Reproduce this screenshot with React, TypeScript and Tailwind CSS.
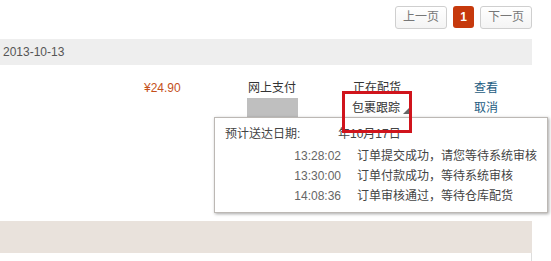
import React from "react";

const font = { fontFamily: '"Liberation Sans", "Noto Sans CJK SC", sans-serif' };

export default function App() {
  const logs = [
    ["13:28:02", "订单提交成功，请您等待系统审核"],
    ["13:30:00", "订单付款成功，等待系统审核"],
    ["14:08:36", "订单审核通过，等待仓库配货"],
  ];
  return (
    <div
      className="relative w-[551px] h-[261px] overflow-hidden bg-white text-[12px] text-[#333]"
      style={font}
    >
      <div className="w-[532px]">
        {/* pagination */}
        <div className="flex justify-end items-start pt-[6px] gap-[6px]">
          <button className="w-[52px] h-[23px] border border-[#cfcfcf] rounded-[3px] bg-gradient-to-b from-white to-[#f4f4f4] text-[#777] text-[12px] leading-[21px]">
            上一页
          </button>
          <button className="w-[21px] h-[22px] rounded-[3px] bg-[#c6390c] text-white font-bold text-[12px] leading-[22px]">
            1
          </button>
          <button className="w-[52px] h-[23px] border border-[#cfcfcf] rounded-[3px] bg-gradient-to-b from-white to-[#f4f4f4] text-[#777] text-[12px] leading-[21px]">
            下一页
          </button>
        </div>

        {/* date bar */}
        <div className="mt-[10px] h-[26px] bg-[#eeeeee] pl-[3px] leading-[26px] text-[#555]">
          2013-10-13
        </div>

        {/* order row */}
        <div className="h-[156px] pt-[13px] flex leading-[20px]">
          <div className="w-[144px]" />
          <div className="w-[103px] text-[#c4501a]">¥24.90</div>
          <div className="w-[105px]">
            <div className="pl-[1px]">网上支付</div>
            <div className="w-[51px] h-[20px] bg-[#bfbfbf]" />
          </div>
          <div className="w-[122px]">
            <div className="pl-[1px]">正在配货</div>
            <div className="flex items-end">
              <span>包裹跟踪</span>
              <svg width="6" height="6" viewBox="0 0 6 6" className="ml-[3px] mb-[4px]">
                <polygon points="6,0 6,6 0,6" fill="#666" />
              </svg>
            </div>
          </div>
          <div className="text-[#1d5c82]">
            <div>查看</div>
            <div>取消</div>
          </div>
        </div>

        {/* bottom band */}
        <div className="h-[32px] bg-[#e9e2dc]" />
        <div className="h-[8px] border-r border-[#dddddd]" />
      </div>

      {/* tracking popup */}
      <div className="absolute left-[214px] top-[117px] w-[334px] h-[96px] bg-white border border-[#bcb8b4] shadow-[1px_1px_3px_rgba(0,0,0,0.35)] leading-[20px]">
        <div className="flex pt-[6px] pl-[10px] text-[#444]">
          <span className="w-[113px]">预计送达日期:</span>
          <span>年10月17日</span>
        </div>
        <div className="mt-[2px]">
          {logs.map(([t, m]) => (
            <div key={t} className="flex">
              <span className="w-[126px] text-right text-[#666]">{t}</span>
              <span className="ml-[16px] text-[#444]">{m}</span>
            </div>
          ))}
        </div>
      </div>

      {/* red highlight box */}
      <div className="absolute left-[342px] top-[91px] w-[70px] h-[42px] border-[3px] border-[#d0141c]" />
    </div>
  );
}
